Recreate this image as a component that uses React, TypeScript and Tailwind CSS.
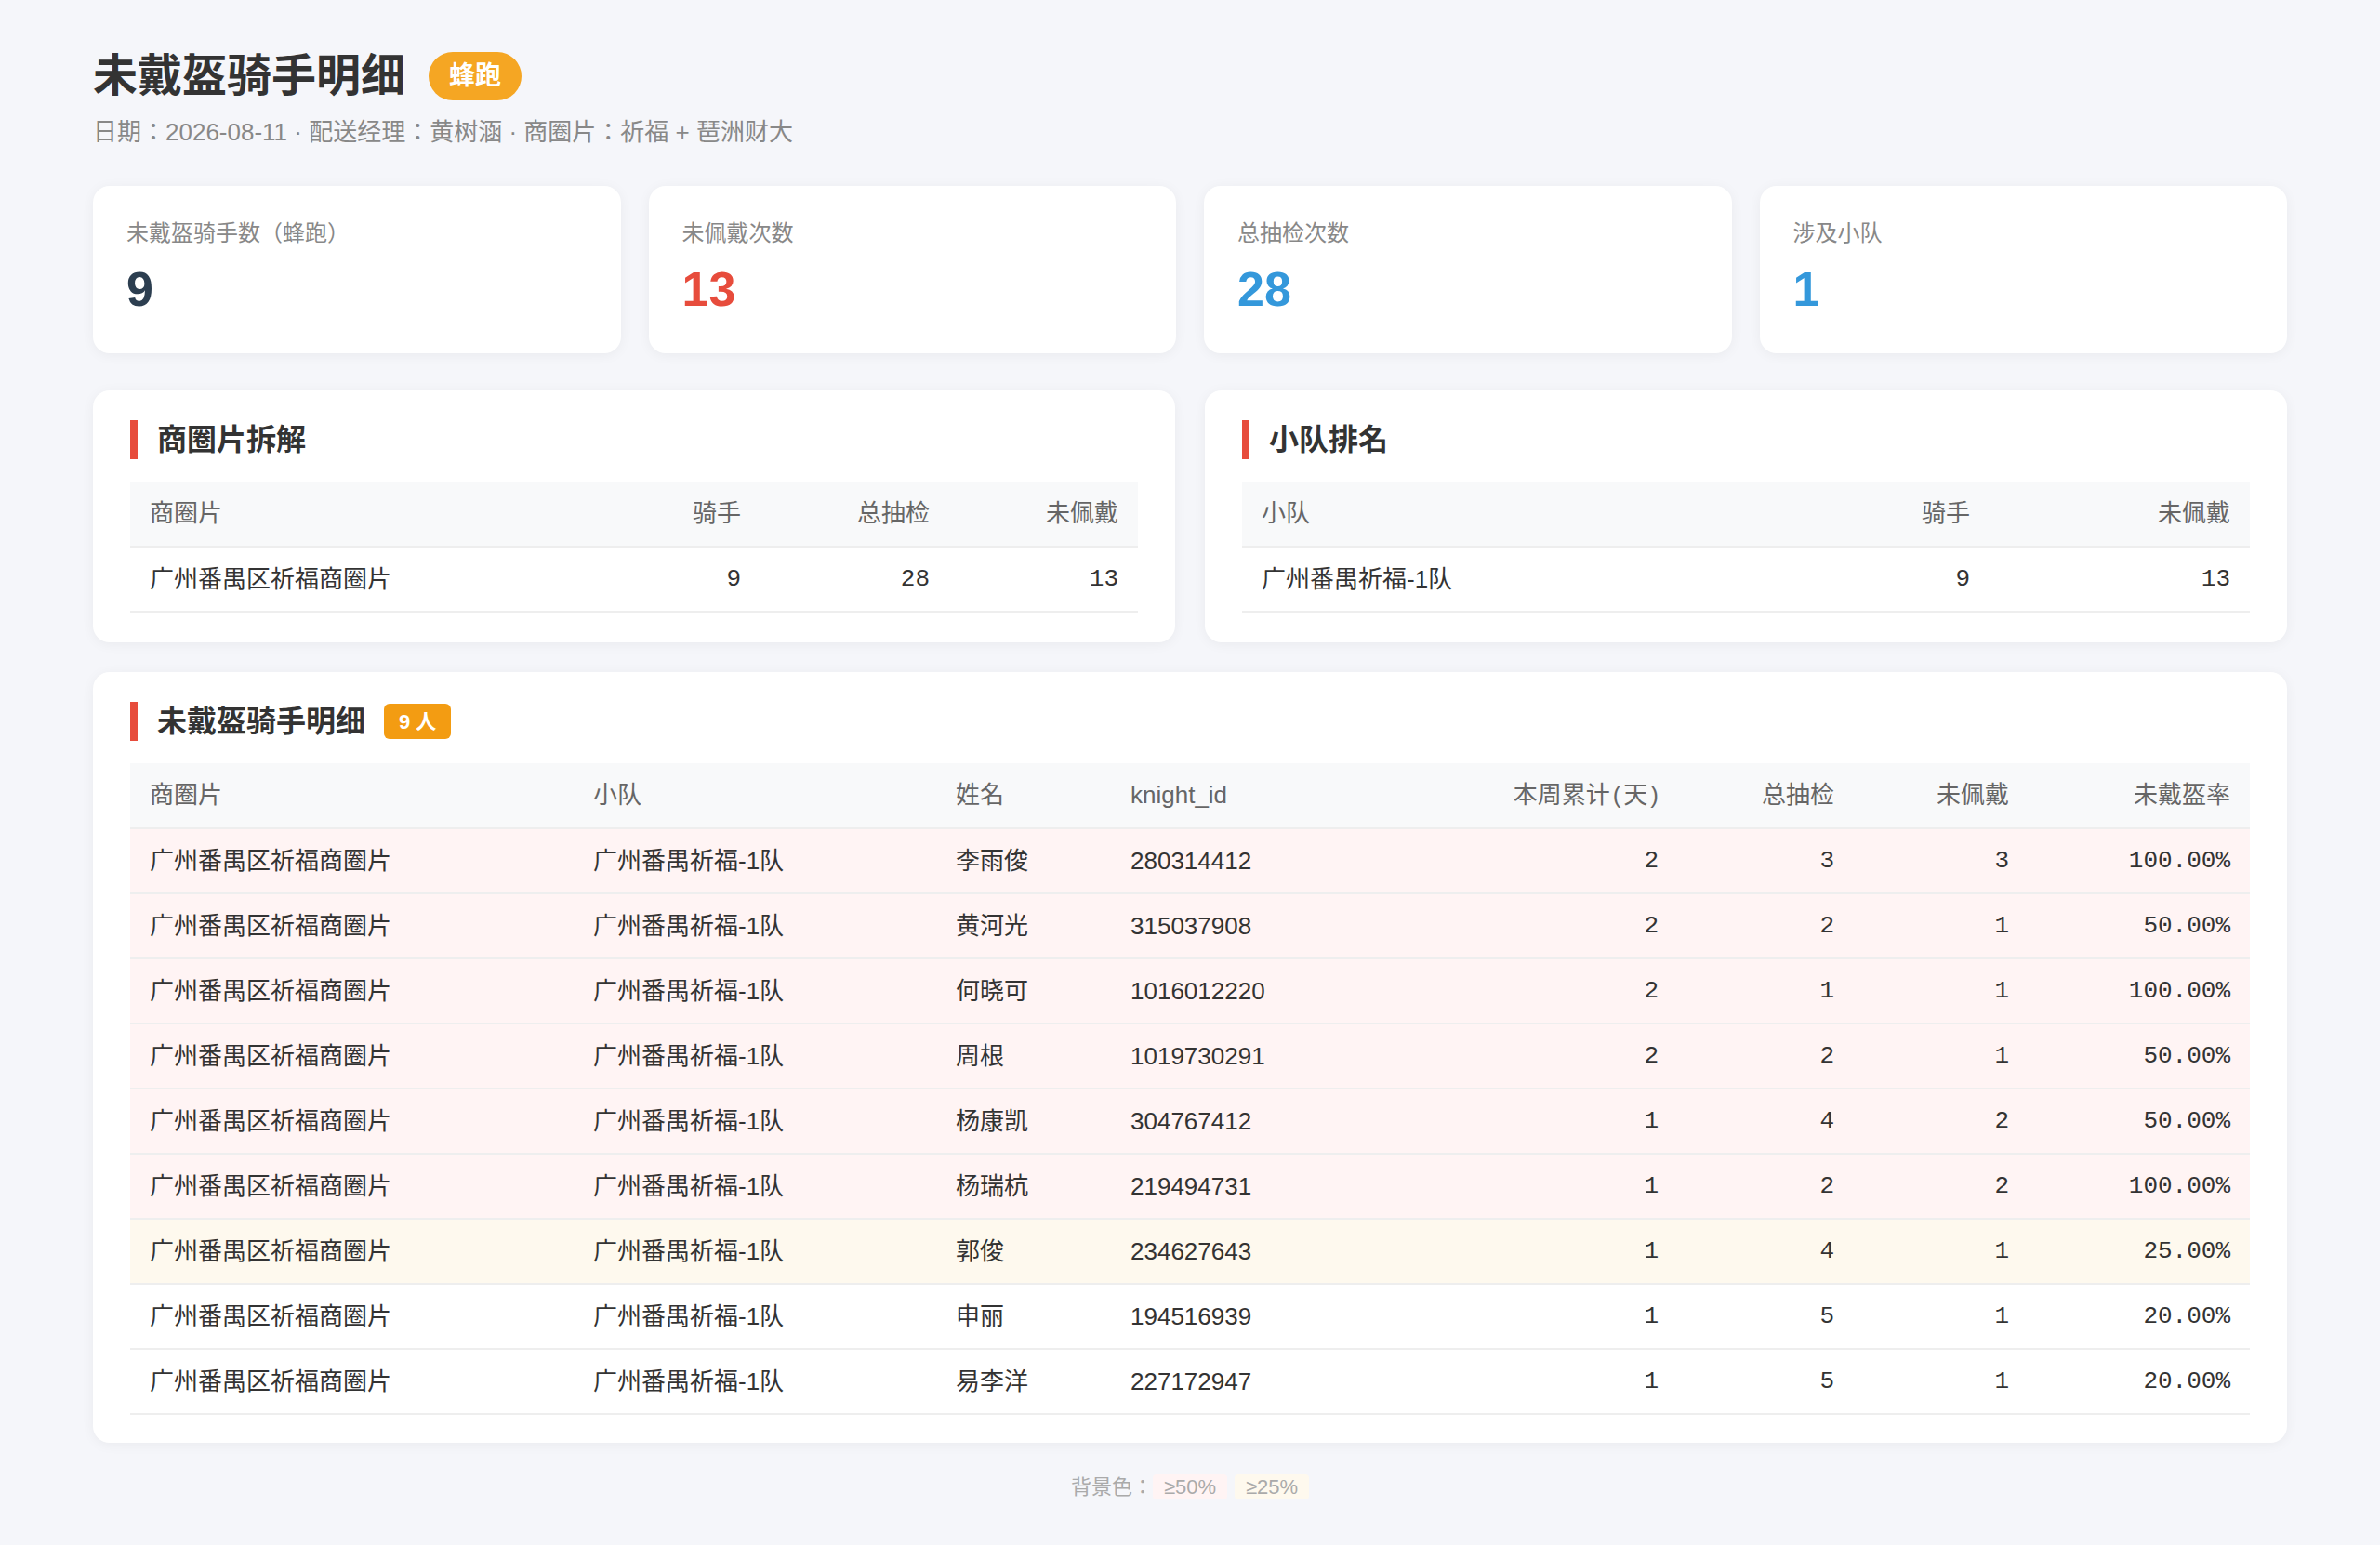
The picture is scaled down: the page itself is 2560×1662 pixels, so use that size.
import React from "react";

type Row = {
    area: string;
    team: string;
    name: string;
    id: string;
    days: number;
    checks: number;
    missed: number;
    rate: string;
    tone: "red" | "yellow" | "none";
};

const rows: Row[] = [
    { area: "广州番禺区祈福商圈片", team: "广州番禺祈福-1队", name: "李雨俊", id: "280314412", days: 2, checks: 3, missed: 3, rate: "100.00%", tone: "red" },
    { area: "广州番禺区祈福商圈片", team: "广州番禺祈福-1队", name: "黄河光", id: "315037908", days: 2, checks: 2, missed: 1, rate: "50.00%", tone: "red" },
    { area: "广州番禺区祈福商圈片", team: "广州番禺祈福-1队", name: "何晓可", id: "1016012220", days: 2, checks: 1, missed: 1, rate: "100.00%", tone: "red" },
    { area: "广州番禺区祈福商圈片", team: "广州番禺祈福-1队", name: "周根", id: "1019730291", days: 2, checks: 2, missed: 1, rate: "50.00%", tone: "red" },
    { area: "广州番禺区祈福商圈片", team: "广州番禺祈福-1队", name: "杨康凯", id: "304767412", days: 1, checks: 4, missed: 2, rate: "50.00%", tone: "red" },
    { area: "广州番禺区祈福商圈片", team: "广州番禺祈福-1队", name: "杨瑞杭", id: "219494731", days: 1, checks: 2, missed: 2, rate: "100.00%", tone: "red" },
    { area: "广州番禺区祈福商圈片", team: "广州番禺祈福-1队", name: "郭俊", id: "234627643", days: 1, checks: 4, missed: 1, rate: "25.00%", tone: "yellow" },
    { area: "广州番禺区祈福商圈片", team: "广州番禺祈福-1队", name: "申丽", id: "194516939", days: 1, checks: 5, missed: 1, rate: "20.00%", tone: "none" },
    { area: "广州番禺区祈福商圈片", team: "广州番禺祈福-1队", name: "易李洋", id: "227172947", days: 1, checks: 5, missed: 1, rate: "20.00%", tone: "none" },
];

const stats = [
    { label: "未戴盔骑手数（蜂跑）", value: "9", color: "text-[#2c3e50]" },
    { label: "未佩戴次数", value: "13", color: "text-[#e74c3c]" },
    { label: "总抽检次数", value: "28", color: "text-[#3498db]" },
    { label: "涉及小队", value: "1", color: "text-[#3498db]" },
];

const th = "h-[70px] px-[21px] bg-[#f8f9fa] text-[#666] font-normal whitespace-nowrap border-b-2 border-[#eeeeee]";
const td = "h-[70px] px-[21px] whitespace-nowrap border-b-2 border-[#eeeeee]";
const mono = "font-['Liberation_Mono',monospace]";

const SectionTitle = ({ children }: { children: React.ReactNode }) => (
    <div className="flex items-center h-[42px] border-l-[8px] border-[#e74c3c] pl-[21px] text-[32px] font-bold text-[#333] mb-[24px]">
        {children}
    </div>
);

const card = "bg-white rounded-[18px] shadow-[0_2px_14px_rgba(0,0,0,0.05)]";

export default function App() {
    return (
        <div className="min-h-screen bg-[#f5f6fa] px-[100px] pt-[53px] pb-[49px] font-['Liberation_Sans','Noto_Sans_CJK_JP',sans-serif] text-[#333]">
            <div className="flex items-center gap-[25px]">
                <h1 className="text-[48px] leading-[58px] font-bold text-[#333]">未戴盔骑手明细</h1>
                <span className="h-[52px] px-[22px] rounded-full bg-[#f5a623] text-white text-[28px] font-bold flex items-center">
                    蜂跑
                </span>
            </div>
            <div className="mt-[13px] text-[26px] leading-[36px] text-[#888]">
                日期：2026-08-11 · 配送经理：黄树涵 · 商圈片：祈福 + 琶洲财大
            </div>

            <div className="mt-[40px] grid grid-cols-4 gap-[30px]">
                {stats.map((s) => (
                    <div key={s.label} className={`${card} px-[36px] pt-[34px] pb-[38px]`}>
                        <div className="text-[24px] leading-[34px] text-[#888]">{s.label}</div>
                        <div className={`mt-[12px] text-[52px] leading-[62px] font-bold ${s.color}`}>{s.value}</div>
                    </div>
                ))}
            </div>

            <div className="mt-[40px] grid grid-cols-2 gap-[32px]">
                <div className={`${card} px-[40px] py-[32px]`}>
                    <SectionTitle>商圈片拆解</SectionTitle>
                    <table className="w-full table-fixed border-collapse text-[26px]">
                        <thead>
                            <tr>
                                <th className={`${th} text-left`}>商圈片</th>
                                <th className={`${th} text-right w-[203px]`}>骑手</th>
                                <th className={`${th} text-right w-[203px]`}>总抽检</th>
                                <th className={`${th} text-right w-[203px]`}>未佩戴</th>
                            </tr>
                        </thead>
                        <tbody>
                            <tr>
                                <td className={`${td} text-left`}>广州番禺区祈福商圈片</td>
                                <td className={`${td} text-right ${mono}`}>9</td>
                                <td className={`${td} text-right ${mono}`}>28</td>
                                <td className={`${td} text-right ${mono}`}>13</td>
                            </tr>
                        </tbody>
                    </table>
                </div>
                <div className={`${card} px-[40px] py-[32px]`}>
                    <SectionTitle>小队排名</SectionTitle>
                    <table className="w-full table-fixed border-collapse text-[26px]">
                        <thead>
                            <tr>
                                <th className={`${th} text-left`}>小队</th>
                                <th className={`${th} text-right w-[280px]`}>骑手</th>
                                <th className={`${th} text-right w-[280px]`}>未佩戴</th>
                            </tr>
                        </thead>
                        <tbody>
                            <tr>
                                <td className={`${td} text-left`}>广州番禺祈福-1队</td>
                                <td className={`${td} text-right ${mono}`}>9</td>
                                <td className={`${td} text-right ${mono}`}>13</td>
                            </tr>
                        </tbody>
                    </table>
                </div>
            </div>

            <div className={`${card} mt-[32px] px-[40px] pt-[32px] pb-[30px]`}>
                <SectionTitle>
                    未戴盔骑手明细
                    <span className="ml-[20px] h-[38px] px-[16px] rounded-[6px] bg-[#f39c12] text-white text-[22px] font-bold flex items-center">
                        9 人
                    </span>
                </SectionTitle>
                <table className="w-full table-fixed border-collapse text-[26px]">
                    <thead>
                        <tr>
                            <th className={`${th} text-left w-[477px]`}>商圈片</th>
                            <th className={`${th} text-left w-[390px]`}>小队</th>
                            <th className={`${th} text-left w-[188px]`}>姓名</th>
                            <th className={`${th} text-left w-[375px]`}>knight_id</th>
                            <th className={`${th} text-right w-[235px]`}>
                                本周累计<span className="px-[3px]">(</span>天<span className="pl-[3px]">)</span>
                            </th>
                            <th className={`${th} text-right w-[189px]`}>总抽检</th>
                            <th className={`${th} text-right w-[188px]`}>未佩戴</th>
                            <th className={`${th} text-right w-[238px]`}>未戴盔率</th>
                        </tr>
                    </thead>
                    <tbody>
                        {rows.map((r) => {
                            const bg = r.tone === "red" ? "bg-[#fff4f4]" : r.tone === "yellow" ? "bg-[#fef9ee]" : "bg-white";
                            return (
                                <tr key={r.id} className={bg}>
                                    <td className={`${td} text-left`}>{r.area}</td>
                                    <td className={`${td} text-left`}>{r.team}</td>
                                    <td className={`${td} text-left`}>{r.name}</td>
                                    <td className={`${td} text-left`}>{r.id}</td>
                                    <td className={`${td} text-right ${mono}`}>{r.days}</td>
                                    <td className={`${td} text-right ${mono}`}>{r.checks}</td>
                                    <td className={`${td} text-right ${mono}`}>{r.missed}</td>
                                    <td className={`${td} text-right ${mono}`}>{r.rate}</td>
                                </tr>
                            );
                        })}
                    </tbody>
                </table>
            </div>

            <div className="mt-[34px] flex justify-center items-center text-[22px] leading-[27px] text-[#aaa]">
                <span>背景色：</span>
                <span className="px-[12px] rounded-[4px] bg-[#fff4f4]">≥50%</span>
                <span className="ml-[8px] px-[12px] rounded-[4px] bg-[#fef9ee]">≥25%</span>
            </div>
        </div>
    );
}
